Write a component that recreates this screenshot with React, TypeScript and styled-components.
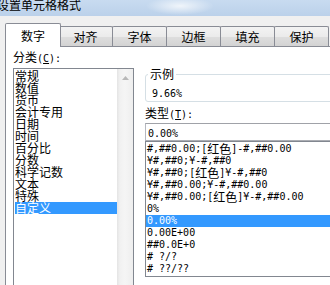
import styled, { createGlobalStyle } from "styled-components";

const GlobalStyle = createGlobalStyle`
  html, body {
    margin: 0;
    padding: 0;
    background: #f0f0f0;
  }
  body {
    width: 330px;
    height: 285px;
    overflow: hidden;
    font-family: "Noto Sans CJK SC", sans-serif;
    font-size: 12px;
    color: #000;
  }
`;

const categories = [
  "常规",
  "数值",
  "货币",
  "会计专用",
  "日期",
  "时间",
  "百分比",
  "分数",
  "科学记数",
  "文本",
  "特殊",
  "自定义",
];

const formats = [
  "#,##0.00;[红色]-#,##0.00",
  "¥#,##0;¥-#,##0",
  "¥#,##0;[红色]¥-#,##0",
  "¥#,##0.00;¥-#,##0.00",
  "¥#,##0.00;[红色]¥-#,##0.00",
  "0%",
  "0.00%",
  "0.00E+00",
  "##0.0E+0",
  "# ?/?",
  "# ??/??",
];

const tabs = ["数字", "对齐", "字体", "边框", "填充", "保护"];

const Dialog = styled.div`
  width: 420px;
  display: flex;
  flex-direction: column;
`;

const TitleBar = styled.div`
  height: 16px;
  display: flex;
  align-items: flex-start;
  background:
    radial-gradient(ellipse 34px 9px at 180px 6px, rgba(255, 255, 255, 0.75), rgba(255, 255, 255, 0)),
    linear-gradient(#c8dbf0, #bbd1ea);
  overflow: hidden;
`;

const Title = styled.span`
  margin: -1px 0 0 -3px;
  line-height: 12px;
  white-space: nowrap;
`;

const Client = styled.div`
  padding: 7px 0 0 5px;
  background: #f0f0f0;
`;

const TabRow = styled.div`
  display: flex;
  align-items: flex-end;
  height: 23px;
`;

const Tab = styled.div<{ $active?: boolean }>`
  box-sizing: border-box;
  display: flex;
  align-items: center;
  justify-content: center;
  width: ${(p) => (p.$active ? "56px" : "55px")};
  height: ${(p) => (p.$active ? "24px" : "20px")};
  margin: ${(p) => (p.$active ? "0 -2px -1px 0" : "0 0 0 -1px")};
  border: 1px solid #898c95;
  border-bottom: none;
  border-radius: 2px 2px 0 0;
  background: ${(p) =>
    p.$active
      ? "#fff"
      : "linear-gradient(#f3f3f3, #ebebeb 50%, #dedede 51%, #d3d3d3)"};
  z-index: ${(p) => (p.$active ? 1 : 0)};
  line-height: 12px;
`;

const Panel = styled.div`
  display: grid;
  grid-template-columns: 121px 1fr;
  column-gap: 11px;
  height: 260px;
  padding: 4px 0 0 7px;
  border: 1px solid #898c95;
  background: #fff;
`;

const Column = styled.div`
  display: flex;
  flex-direction: column;
  min-width: 0;
`;

const Label = styled.div`
  line-height: 12px;
  height: 12px;
  white-space: nowrap;
`;

const Mono = styled.span`
  font-family: "DejaVu Sans Mono", monospace;
  font-size: 10px;
`;

const Cjk = styled.span`
  display: inline-block;
  height: 12px;
  line-height: 12px;
  vertical-align: top;
  font-family: "Noto Sans CJK SC", sans-serif;
  font-size: 12px;
`;

const CategoryBox = styled.div`
  display: flex;
  height: 230px;
  margin-top: 5px;
  border: 1px solid #828790;
`;

const CategoryItems = styled.div`
  flex: 1;
  padding-top: 1px;
`;

const CategoryItem = styled.div<{ $selected?: boolean }>`
  height: 12px;
  line-height: 12px;
  margin-left: 1px;
  white-space: nowrap;
  background: ${(p) => (p.$selected ? "#3399ff" : "transparent")};
  color: ${(p) => (p.$selected ? "#fff" : "#000")};
`;

const ScrollTrack = styled.div`
  width: 16px;
  background: linear-gradient(to right, #e4e4e4, #f1f1f1 3px, #f5f5f5 50%, #eeeeee);
`;

const ScrollButton = styled.div`
  height: 17px;
  display: flex;
  align-items: center;
  justify-content: center;
`;

const GroupBox = styled.fieldset`
  margin: 17px 0 0;
  padding: 0 0 3px 2px;
  min-width: 0;
  border: 1px solid #d5dfe5;
  border-radius: 3px;
  box-shadow: inset 1px 1px 0 #fff;
`;

const Legend = styled.legend`
  padding: 0 2px;
  line-height: 12px;
`;

const Sample = styled.div`
  margin-top: 6px;
  padding-left: 4px;
  line-height: 12px;
  height: 12px;
`;

const TypeLabel = styled(Label)`
  margin-top: 5px;
`;

const TypeInput = styled.div`
  box-sizing: border-box;
  height: 18px;
  margin-top: 4px;
  padding-left: 2px;
  line-height: 16px;
  border: 1px solid;
  border-color: #a0a2a8 #dbdfe6 #abadb3 #b5b8c0;
`;

const FormatList = styled.div`
  padding: 1px 0;
  border: 1px solid #828790;
`;

const FormatItem = styled.div<{ $selected?: boolean }>`
  height: 12px;
  line-height: 12px;
  padding-left: 1px;
  white-space: nowrap;
  overflow: hidden;
  font-family: "DejaVu Sans Mono", monospace;
  font-size: 10px;
  background: ${(p) => (p.$selected ? "#3399ff" : "transparent")};
  color: ${(p) => (p.$selected ? "#fff" : "#000")};
`;

function renderFormat(text: string) {
  const parts = text.split("红色");
  return parts.map((part, i) => (
    <span key={i}>
      {part}
      {i < parts.length - 1 && <Cjk>红色</Cjk>}
    </span>
  ));
}

export default function App() {
  return (
    <>
      <GlobalStyle />
      <Dialog>
        <TitleBar>
          <Title>设置单元格格式</Title>
        </TitleBar>
        <Client>
          <TabRow>
            {tabs.map((t, i) => (
              <Tab key={t} $active={i === 0}>
                {t}
              </Tab>
            ))}
          </TabRow>
          <Panel>
            <Column>
              <Label>
                分类<Mono>(<u>C</u>):</Mono>
              </Label>
              <CategoryBox>
                <CategoryItems>
                  {categories.map((c) => (
                    <CategoryItem key={c} $selected={c === "自定义"}>
                      {c}
                    </CategoryItem>
                  ))}
                </CategoryItems>
                <ScrollTrack>
                  <ScrollButton>
                    <svg width="7" height="4" viewBox="0 0 7 4">
                      <path d="M0 4 L3.5 0 L7 4 Z" fill="#b8b8b8" />
                    </svg>
                  </ScrollButton>
                </ScrollTrack>
              </CategoryBox>
            </Column>
            <Column>
              <GroupBox>
                <Legend>示例</Legend>
                <Sample>
                  <Mono>9.66%</Mono>
                </Sample>
              </GroupBox>
              <TypeLabel>
                类型<Mono>(<u>T</u>):</Mono>
              </TypeLabel>
              <TypeInput>
                <Mono>0.00%</Mono>
              </TypeInput>
              <FormatList>
                {formats.map((f) => (
                  <FormatItem key={f} $selected={f === "0.00%"}>
                    {renderFormat(f)}
                  </FormatItem>
                ))}
              </FormatList>
            </Column>
          </Panel>
        </Client>
      </Dialog>
    </>
  );
}
